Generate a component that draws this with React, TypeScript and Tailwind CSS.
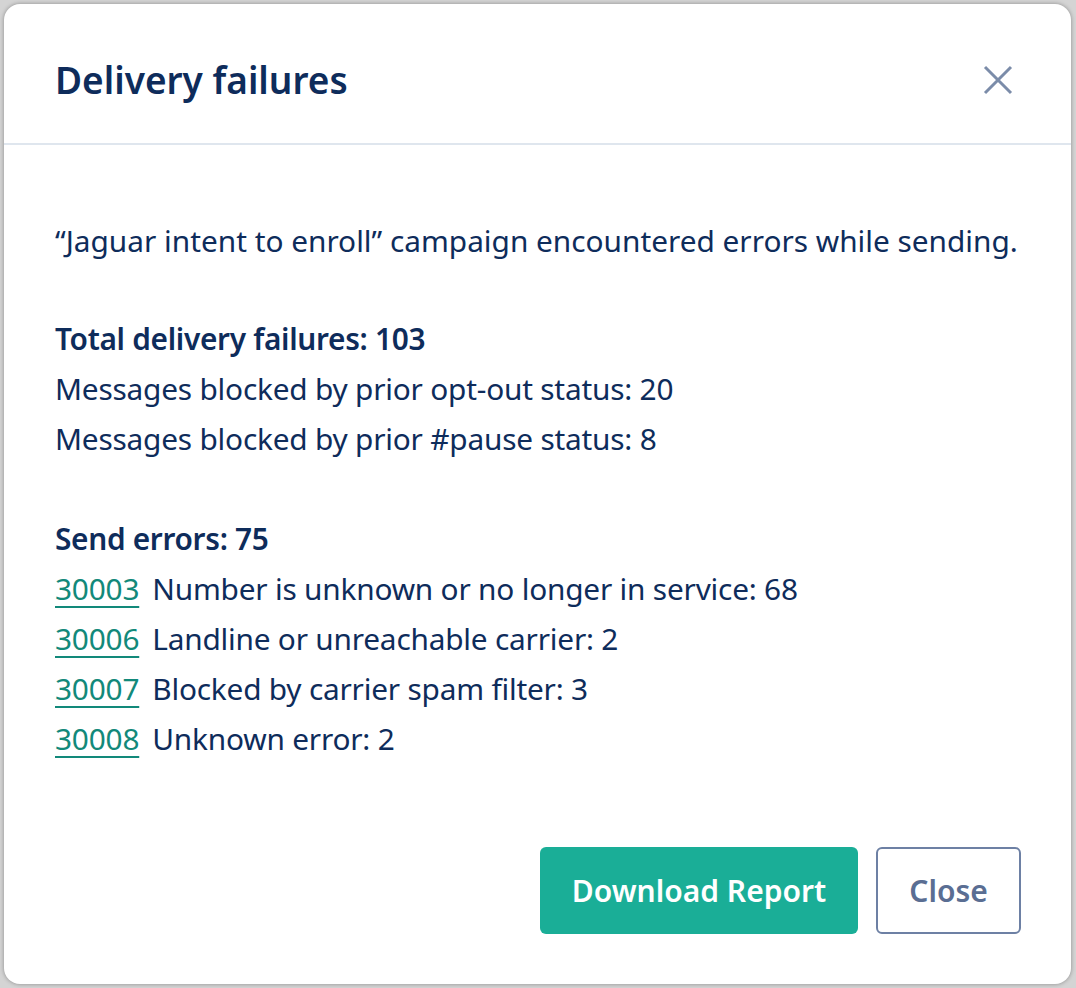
const errors = [
  { code: '30003', label: 'Number is unknown or no longer in service', count: 68 },
  { code: '30006', label: 'Landline or unreachable carrier', count: 2 },
  { code: '30007', label: 'Blocked by carrier spam filter', count: 3 },
  { code: '30008', label: 'Unknown error', count: 2 },
];

export default function App() {
  return (
    <div
      className="w-[1076px] h-[988px] bg-[#d4d4d4] p-[4px] pr-[5px]"
      style={{ fontFamily: '"Noto Sans", Lato, sans-serif' }}
    >
      <div className="h-[980px] bg-white rounded-[16px] shadow-[0_0_4px_rgba(0,0,0,0.35)] flex flex-col text-[#0e2c5b]">
        {/* Header */}
        <div className="h-[141px] flex items-center justify-between pl-[51px] pr-[58px] border-b-[2px] border-[#dfe6ee]">
          <h2 className="text-[37px] font-semibold leading-none pt-[12px]">Delivery failures</h2>
          <button className="text-[#7b8ca9] pt-[12px]" title="Close">
            <svg width="30" height="30" viewBox="0 0 30 30" fill="none" stroke="currentColor" strokeWidth="3">
              <path d="M2 2L28 28M28 2L2 28" />
            </svg>
          </button>
        </div>

        {/* Body */}
        <div className="flex-1 flex flex-col pl-[51px] pr-[50px] pt-[71px] pb-[50px] text-[29.8px] leading-[50px]">
          <p>“Jaguar intent to enroll” campaign encountered errors while sending.</p>

          <div className="mt-[48px]">
            <p className="font-semibold tracking-[-0.3px]">Total delivery failures: 103</p>
            <p className="tracking-[-0.2px]">Messages blocked by prior opt-out status: 20</p>
            <p className="tracking-[-0.2px]">Messages blocked by prior #pause status: 8</p>
          </div>

          <div className="mt-[50px]">
            <p className="font-semibold tracking-[-0.3px]">Send errors: 75</p>
            {errors.map((e) => (
              <p key={e.code} className="tracking-[-0.2px]">
                <a href="#" className="text-[#12897a] underline underline-offset-[6px] decoration-[2px] mr-[13px]">
                  {e.code}
                </a>
                {e.label}: {e.count}
              </p>
            ))}
          </div>

          <div className="mt-auto flex justify-end gap-[18px]">
            <button className="h-[87px] w-[318px] rounded-[6px] bg-[#1aae97] text-white text-[30px] font-semibold">
              Download Report
            </button>
            <button className="h-[87px] w-[145px] rounded-[6px] border-[2px] border-[#6d80a4] text-[#5a6e93] text-[30px] font-semibold">
              Close
            </button>
          </div>
        </div>
      </div>
    </div>
  );
}
